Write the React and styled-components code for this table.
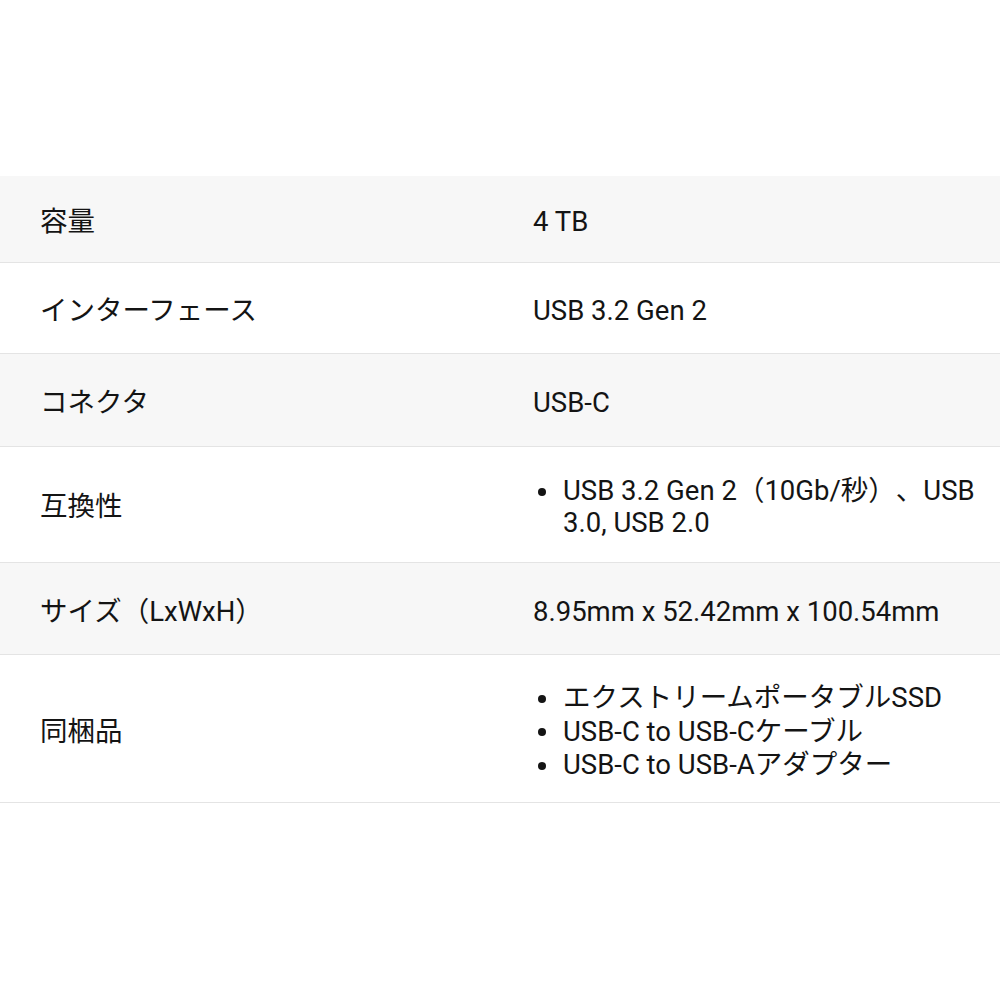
import React from 'react'
import styled, { createGlobalStyle } from 'styled-components'

const GlobalStyle = createGlobalStyle`
  body {
    margin: 0;
    background: #ffffff;
    font-family: Roboto, "Noto Sans CJK JP", sans-serif;
    color: #141414;
  }
`

const Page = styled.div`
  padding-top: 176px;
`

const SpecTable = styled.div`
  display: flex;
  flex-direction: column;
`

const Row = styled.div`
  display: grid;
  grid-template-columns: 533px 1fr;
  align-items: center;
  padding: ${(p) => p.$top}px 0 ${(p) => p.$bottom}px;
  background: ${(p) => (p.$shaded ? '#f7f7f7' : '#ffffff')};
  border-bottom: 1px solid #e4e4e4;
  font-size: 27.5px;
  line-height: 33.5px;
  text-spacing-trim: space-all;
`

const Label = styled.div`
  padding-left: 40px;
`

const Value = styled.div`
  padding-right: 20px;
`

const BulletList = styled.ul`
  list-style: none;
  margin: 0;
  padding: 0 0 0 30px;
`

const Bullet = styled.li`
  position: relative;
  line-height: ${(p) => p.$lh || 33.5}px;

  &::before {
    content: '';
    position: absolute;
    left: -25px;
    top: ${(p) => ((p.$lh || 33.5) / 2) - 3}px;
    width: 8px;
    height: 8px;
    border-radius: 50%;
    background: #141414;
  }
`

const rows = [
  { label: '容量', value: '4 TB', top: 29, bottom: 23 },
  { label: 'インターフェース', value: 'USB 3.2 Gen 2', top: 31, bottom: 26 },
  { label: 'コネクタ', value: 'USB-C', top: 32, bottom: 26 },
  {
    label: '互換性',
    list: ['USB 3.2 Gen 2（10Gb/秒）、USB 3.0, USB 2.0'],
    lh: 32,
    top: 28,
    bottom: 23,
  },
  { label: 'サイズ（LxWxH）', value: '8.95mm x 52.42mm x 100.54mm', top: 32, bottom: 26 },
  {
    label: '同梱品',
    list: [
      'エクストリームポータブルSSD',
      'USB-C to USB-Cケーブル',
      'USB-C to USB-Aアダプター',
    ],
    top: 26,
    bottom: 20,
  },
]

export default function App() {
  return (
    <Page>
      <GlobalStyle />
      <SpecTable>
        {rows.map((r, i) => (
          <Row key={r.label} $shaded={i % 2 === 0} $top={r.top} $bottom={r.bottom}>
            <Label>{r.label}</Label>
            <Value>
              {r.list ? (
                <BulletList>
                  {r.list.map((item) => (
                    <Bullet key={item} $lh={r.lh}>
                      {item}
                    </Bullet>
                  ))}
                </BulletList>
              ) : (
                r.value
              )}
            </Value>
          </Row>
        ))}
      </SpecTable>
    </Page>
  )
}
